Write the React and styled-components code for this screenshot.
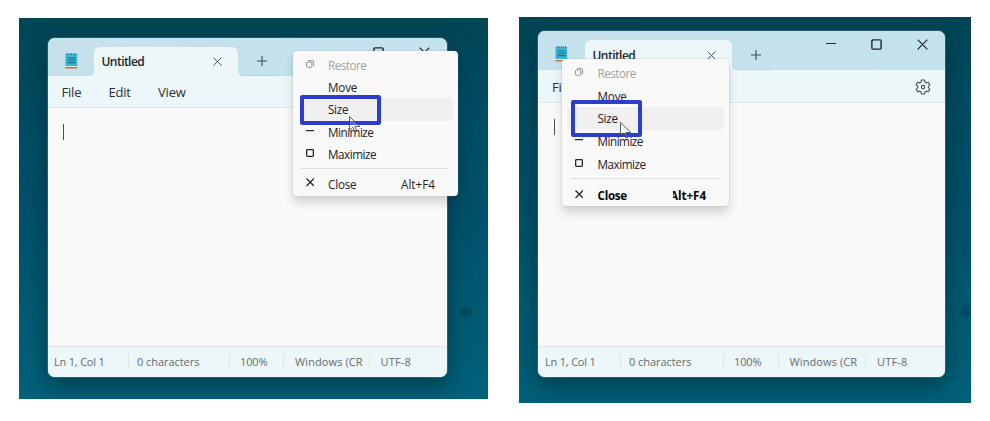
import React from "react";
import styled, { createGlobalStyle } from "styled-components";

const Global = createGlobalStyle`
  * { box-sizing: border-box; }
  html, body { margin: 0; background: #fff; overflow: hidden; }
  body { font-family: "Open Sans", "Noto Sans", sans-serif; color: #1d2326; }
  svg { display: block; flex: none; }
`;

const Page = styled.main`
  display: grid;
  grid-template-columns: 469px 452px;
  column-gap: 31px;
  align-items: start;
  width: 990px;
  height: 421px;
  padding: 17px 0 0 19px;
  background: #fff;
`;

const Desktop = styled.section`
  position: relative;
  height: ${(p) => p.$g.deskH}px;
  margin-top: ${(p) => p.$g.deskTop}px;
  padding: ${(p) => p.$g.padTop}px 0 0 ${(p) => p.$g.padLeft}px;
  overflow: hidden;
  background:
    radial-gradient(circle at ${(p) => p.$g.dot}, rgba(0, 50, 75, 0.4) 0 3px, transparent 8px),
    linear-gradient(180deg, #004555 0%, #004b62 22%, #00506a 50%, #005a72 75%, #00617a 100%);
`;

const WindowShadow = styled.div`
  width: ${(p) => p.$g.winW}px;
  border-radius: 7px;
  box-shadow: 0 0 0 1px rgba(70, 120, 130, 0.55), 0 8px 22px rgba(0, 35, 42, 0.6);
`;

const Window = styled.article`
  display: flex;
  flex-direction: column;
  width: ${(p) => p.$g.winW}px;
  height: ${(p) => p.$g.winH}px;
  border-radius: 7px;
  overflow: hidden;
  background: #f9f9f9;
`;

const TitleBar = styled.header`
  display: flex;
  flex: none;
  height: ${(p) => p.$g.titleH}px;
  background: linear-gradient(170deg, #c6e1eb, #c3e3ed);
`;

const AppIcon = styled.div`
  width: ${(p) => p.$g.tabLeft}px;
  padding: ${(p) => p.$g.iconPad};
`;

const Tab = styled.div`
  position: relative;
  display: flex;
  align-items: center;
  justify-content: space-between;
  width: ${(p) => p.$g.tabW}px;
  margin-top: 9px;
  padding: 0 ${(p) => p.$g.tabPad}px 0 7.5px;
  border-radius: 6px 6px 0 0;
  background: #edf6f9;
  font-size: 12px;
  font-weight: 600;
  letter-spacing: -0.55px;
  color: #20272a;

  &::before, &::after {
    content: "";
    position: absolute;
    bottom: 0;
    width: 4px;
    height: 4px;
  }
  &::before {
    left: -4px;
    background: radial-gradient(circle at 0 0, transparent 3.5px, #edf6f9 4px);
  }
  &::after {
    right: -4px;
    background: radial-gradient(circle at 100% 0, transparent 3.5px, #edf6f9 4px);
  }
`;

const AddTab = styled.div`
  display: flex;
  align-items: center;
  justify-content: center;
  width: 36px;
  margin: 9px 0 0 3px;
  padding-left: 5px;
  border-bottom: 1px solid #b5d3dd;
`;

const Controls = styled.div`
  display: flex;
  gap: ${(p) => p.$g.ctlGap}px;
  margin-left: auto;
  padding: ${(p) => p.$g.ctlPad};
`;

const MenuBar = styled.nav`
  display: flex;
  flex: none;
  align-items: center;
  height: ${(p) => p.$g.menuH}px;
  padding: 1px 14px 0 ${(p) => p.$g.menuPad}px;
  border-bottom: 1px solid #d8e8ec;
  background: #edf6f9;
  font-size: 13px;
  letter-spacing: -0.2px;
  color: #2c3134;
`;

const MenuName = styled.span`
  width: ${(p) => p.$w}px;
`;

const GearSlot = styled.span`
  margin-left: auto;
`;

const Editor = styled.div`
  flex: 1;
  padding: 16px 0 0 ${(p) => p.$g.caretPad}px;
`;

const Caret = styled.div`
  width: 1px;
  height: 16px;
  background: #505050;
`;

const StatusBar = styled.footer`
  display: grid;
  grid-template-columns: ${(p) => p.$g.cols};
  flex: none;
  align-items: center;
  height: 31px;
  border-top: 1px solid #d9e8ec;
  background: #edf6f9;
  font-size: 11px;
  color: #646d70;
`;

const StatusCell = styled.span`
  height: 16px;
  line-height: 16px;
  padding-left: ${(p) => p.$pad}px;
  border-left: 1px solid ${(p) => (p.$first ? "transparent" : "#dbe6e9")};
  letter-spacing: ${(p) => p.$ls}px;
  white-space: nowrap;
`;

const Popup = styled.div`
  position: absolute;
  left: ${(p) => p.$g.popX}px;
  top: ${(p) => p.$g.popY}px;
  width: ${(p) => p.$g.popW}px;
  height: ${(p) => p.$g.popH}px;
  padding: ${(p) => p.$g.popPad}px 5px 0 ${(p) => p.$g.popSide}px;
  border-radius: 4px;
  background: #f9f9f9;
  box-shadow: 0 0 0 1px rgba(120, 130, 135, 0.13), 0 7px 10px rgba(0, 0, 0, 0.15);
`;

const Item = styled.div`
  display: flex;
  align-items: center;
  height: ${(p) => p.$g.rowH}px;
  border-radius: 3px;
  background: ${(p) => (p.$on ? "#f0f0f0" : "transparent")};
  color: ${(p) => (p.$off ? "#a4a4a4" : p.$bold ? "#050505" : "#24201f")};
  font-size: 11.7px;
  font-weight: ${(p) => (p.$bold ? 700 : 400)};
  letter-spacing: ${(p) => p.$ls || 0}px;
`;

const ItemIcon = styled.span`
  display: flex;
  justify-content: center;
  width: 10px;
  padding-bottom: 2px;
  margin: 0 ${(p) => p.$g.iconGap}px 0 ${(p) => p.$g.iconLead}px;
`;

const Shortcut = styled.span`
  margin-left: auto;
  padding-right: 18px;
  letter-spacing: ${(p) => p.$g.shortcutLs}px;
  clip-path: ${(p) => (p.$g.bold ? "inset(0 0 0 3px)" : "none")};
`;

const Divider = styled.div`
  height: 1px;
  margin: ${(p) => p.$g.divMargin};
  background: #dedede;
`;

const Highlight = styled.div`
  position: absolute;
  left: ${(p) => p.$g.boxX}px;
  top: ${(p) => p.$g.boxY}px;
  width: ${(p) => p.$g.boxW}px;
  height: ${(p) => p.$g.boxH}px;
  border: 4px solid #2d3dcc;
  border-radius: 2px;
`;

const Pointer = styled.svg`
  position: absolute;
  left: ${(p) => p.$g.curX}px;
  top: ${(p) => p.$g.curY}px;
`;

const line = { fill: "none", stroke: "#22292c", strokeWidth: 1.1 };

const Notepad = () => (
  <svg width="13" height="17" viewBox="0 0 13 17">
    <path d="M.5 2h11.7v12H.5z" fill="#3db5d5" />
    <path d="M2 1v2M4.2 1v2M6.4 1v2M8.6 1v2M10.8 1v2" stroke="#2a83a0" strokeWidth="1" />
    <path d="M2.5 6h8M2.5 8.3h8M2.5 10.6h8" stroke="#14728f" strokeWidth="1.1" />
    <path d="M.5 14h11.7v1H.5z" fill="#e8e5dc" />
    <path d="M.5 15h11.7v1.5H.5z" fill="#c9742f" />
  </svg>
);
const Cross = ({ size, w = 1.1, color = line.stroke }) => (
  <svg width={size} height={size} viewBox="0 0 10 10">
    <path d="M.6.6l8.8 8.8M9.4.6L.6 9.4" {...line} stroke={color} strokeWidth={w} />
  </svg>
);
const Plus = () => (
  <svg width="10" height="10" viewBox="0 0 10 10">
    <path d="M0 5h10M5 0v10" {...line} stroke="#3d484c" />
  </svg>
);
const Dash = ({ size, w = 1 }) => (
  <svg width={size} height={size} viewBox="0 0 10 10">
    <path d="M0 4.5h10" {...line} strokeWidth={w} />
  </svg>
);
const Square = ({ size, w = 1.3 }) => (
  <svg width={size} height={size} viewBox="0 0 10 10">
    <rect x=".8" y=".8" width="8.4" height="8.4" rx="1" {...line} strokeWidth={w} />
  </svg>
);
const RestoreIcon = () => (
  <svg width="8" height="8" viewBox="0 0 8 8">
    <rect x=".5" y="2" width="5.3" height="5.3" rx="1" fill="none" stroke="#929292" />
    <path d="M2 .6h4Q7.5.6 7.5 2.1v4" fill="none" stroke="#929292" />
  </svg>
);
const Gear = () => (
  <svg width="16" height="16" viewBox="0 0 16 16" fill="none" stroke="#4d5558" strokeWidth="1.15" strokeLinejoin="round">
    <path d="M6.5 1h3l.5 2.1 1.3.75 2.1-.65 1.45 2.5L13.3 7.3v1.4l1.55 1.6-1.45 2.5-2.1-.65-1.3.75L9.5 15h-3L6 12.9l-1.3-.75-2.1.65-1.45-2.5L2.7 8.7V7.3L1.15 5.7 2.6 3.2l2.1.65L6 3.1z" />
    <circle cx="8" cy="8" r="1.7" />
  </svg>
);

const statusItems = [
  ["Ln 1, Col 1", -0.2],
  ["0 characters", -0.05],
  ["100%", -0.15],
  ["Windows (CR", 0.1],
  ["UTF-8", 0.15],
];

const left = {
  deskH: 381, deskTop: 1, padTop: 20, padLeft: 29, dot: "447px 294px",
  winW: 399, winH: 339, titleH: 38, tabLeft: 46, tabW: 144, tabPad: 16, iconPad: "14px 0 0 16.5px",
  ctlGap: 35, ctlPad: "9px 17px 0 0", menuH: 32, menuPad: 13.5, caretPad: 15,
  names: [47, 49.5, 40], cols: "80px 101px 54px 86px 1fr", pads: [5, 8, 10, 11, 10.5],
  popX: 274, popY: 33, popW: 165, popH: 145, popPad: 2.5, popSide: 7,
  rowH: 22.4, iconLead: 5, iconGap: 13, divMargin: "2.5px 5px 3.5px 0",
  boxX: 281, boxY: 77, boxW: 81, boxH: 30, curX: 329, curY: 97,
  shortcutLs: 0.02, closeLs: -0.2,
};
const right = {
  deskH: 386, deskTop: 0, padTop: 14, padLeft: 19, dot: "447px 294px",
  winW: 407, winH: 346, titleH: 39, tabLeft: 47, tabW: 147, tabPad: 16.5, iconPad: "14px 0 0 17px",
  ctlGap: 35, ctlPad: "8px 17px 0 0", menuH: 33, menuPad: 14, caretPad: 16,
  names: [47, 50, 40], cols: "82px 103px 55px 87px 1fr", pads: [6, 8, 10, 10.5, 11],
  popX: 43, popY: 42, popW: 167, popH: 147, popPad: 2.5, popSide: 5,
  rowH: 22.8, iconLead: 7, iconGap: 13.5, divMargin: "3px 5px 4px 3px",
  boxX: 52, boxY: 83, boxW: 71, boxH: 37, curX: 100, curY: 104, bold: true,
  shortcutLs: -0.1, closeLs: -0.3,
};

const CommandMenu = ({ g }) => (
  <Popup $g={g}>
    <Item $g={g} $off $ls={-0.5}><ItemIcon $g={g}><RestoreIcon /></ItemIcon>Restore</Item>
    <Item $g={g} $ls={-0.2}><ItemIcon $g={g} />Move</Item>
    <Item $g={g} $on $ls={-0.3}><ItemIcon $g={g} />Size</Item>
    <Item $g={g} $ls={-0.5}><ItemIcon $g={g}><Dash size={8} w={1.5} /></ItemIcon>Minimize</Item>
    <Item $g={g} $ls={-0.48}><ItemIcon $g={g}><Square size={8} w={1.6} /></ItemIcon>Maximize</Item>
    <Divider $g={g} />
    <Item $g={g} $bold={g.bold} $ls={g.closeLs}>
      <ItemIcon $g={g}><Cross size={8.5} w={1.5} /></ItemIcon>Close
      <Shortcut $g={g}>Alt+F4</Shortcut>
    </Item>
  </Popup>
);

const NotepadDesktop = ({ g }) => (
  <Desktop $g={g}>
    <WindowShadow $g={g}>
      <Window $g={g}>
        <TitleBar $g={g}>
          <AppIcon $g={g}><Notepad /></AppIcon>
          <Tab $g={g}>Untitled<Cross size={9} w={1} color="#3d4649" /></Tab>
          <AddTab><Plus /></AddTab>
          <Controls $g={g}><Dash size={10} /><Square size={11} /><Cross size={11} /></Controls>
        </TitleBar>
        <MenuBar $g={g}>
          {["File", "Edit", "View"].map((name, i) => (
            <MenuName key={name} $w={g.names[i]}>{name}</MenuName>
          ))}
          <GearSlot><Gear /></GearSlot>
        </MenuBar>
        <Editor $g={g}><Caret /></Editor>
        <StatusBar $g={g}>
          {statusItems.map(([label, ls], i) => (
            <StatusCell key={label} $first={i === 0} $pad={g.pads[i]} $ls={ls}>{label}</StatusCell>
          ))}
        </StatusBar>
      </Window>
    </WindowShadow>
    <CommandMenu g={g} />
    <Highlight $g={g} />
    <Pointer $g={g} width="15" height="20" viewBox="0 0 15 20">
      <path d="M1.5 1.5v13.8l3.3-3.2 2.3 5 2-1-2.2-4.6h5z" fill="rgba(255,255,255,.2)" stroke="#3c3c44" strokeWidth=".8" />
    </Pointer>
  </Desktop>
);

export default function App() {
  return (
    <>
      <Global />
      <Page>
        <NotepadDesktop g={left} />
        <NotepadDesktop g={right} />
      </Page>
    </>
  );
}
